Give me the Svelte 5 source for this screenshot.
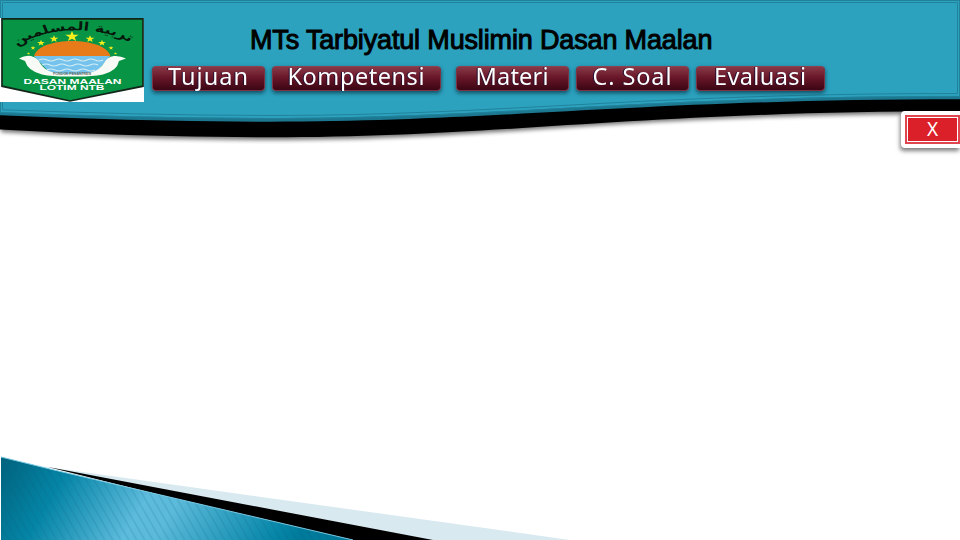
<script>
  const items = [
    { label: 'Tujuan', w: 113, gap: 0, tl: 80 },
    { label: 'Kompetensi', w: 169, gap: 7, tl: 137 },
    { label: 'Materi', w: 113, gap: 15, tl: 73 },
    { label: 'C. Soal', w: 113, gap: 7, tl: 79 },
    { label: 'Evaluasi', w: 129, gap: 7, tl: 92 },
  ];
  const stars = [
    [72, 36.5, 7], [54, 39, 4.6], [90, 39, 4.6], [41, 43, 4], [102, 43, 4],
    [33, 48, 2.6], [111, 48, 2.6], [28.5, 53.5, 1.7], [115.5, 53.5, 1.7],
  ];
  function star(cx, cy, r) {
    return Array.from({ length: 10 }, (_, i) => {
      const q = i % 2 ? r * 0.4 : r;
      const a = (i * Math.PI) / 5;
      return `${cx + q * Math.sin(a)},${cy - q * Math.cos(a) * 0.8}`;
    }).join(' ');
  }
</script>

<main class="slide">
  <svg class="art" viewBox="0 0 960 540" width="960" height="540" aria-hidden="true">
    <defs>
      <filter id="soft" x="-5%" y="-20%" width="110%" height="150%"><feGaussianBlur stdDeviation="2" /></filter>
      <linearGradient id="corner" gradientUnits="userSpaceOnUse" x1="0" y1="470" x2="250" y2="620">
        <stop offset="0" stop-color="#006580" />
        <stop offset=".2" stop-color="#0585a6" />
        <stop offset=".48" stop-color="#5dbbdc" />
        <stop offset=".58" stop-color="#5bb9d9" />
        <stop offset=".92" stop-color="#0787a9" />
        <stop offset="1" stop-color="#007a9a" />
      </linearGradient>
      <pattern id="hatch" width="8" height="12" patternUnits="userSpaceOnUse" patternTransform="skewX(30)">
        <path d="M1 0V12" stroke="#04607b" stroke-opacity=".34" stroke-width=".7" />
      </pattern>
    </defs>
    <path d="M1 80V132C90 137 180 140 270 140C500 140 620 114 960 114V80Z" fill="#000" opacity=".55" filter="url(#soft)" />
    <path d="M0 0H960V111.3C640 111.3 500 137.3 270 137.3C180 137.3 90 134.5 0 129.5Z" fill="#000" />
    <path d="M0 0H960V99.3C640 99.3 500 121.7 270 121.7C180 121.7 90 119 0 115.3Z" fill="#1c7891" />
    <path d="M0 0H959V96C640 96 500 118 270 118C180 118 90 115.6 0 112.3Z" fill="#2ca2bf" />
    <path d="M.5 .5H959.5V96.4C640 96.4 500 118.4 270 118.4C180 118.4 90 116 .5 112.6Z" fill="none" stroke="#21829b" />
    <path d="M2.5 2.5H957.5V93.5C640 93.5 500 115.5 270 115.5C180 115.5 90 113 2.5 109.8Z" fill="none" stroke="#21829b" />
    <path d="M40 466L570 540H420Z" fill="#d9e9f0" />
    <path d="M48 467L433 540H340Z" fill="#000" />
    <path d="M1 457L54 470L353 540H1Z" fill="url(#corner)" />
    <path d="M1 457L54 470L353 540H1Z" fill="url(#hatch)" />
    <path d="M1 457L54 470L353 540" fill="none" stroke="#78c8e3" stroke-width="1" />
  </svg>

  <header>
    <svg class="logo" viewBox="0 18 144 84" width="144" height="84" role="img" aria-label="Logo">
      <path d="M0 18H144V102H0Z" fill="#fff" />
      <path d="M2 18.8H143V86.2L70 101L2 86.2Z" fill="#079545" stroke="#12251a" stroke-width="1.7" />
      <g transform="scale(1 .75)">
        <path id="arch" d="M13 66C42 33 104 33 134 60" fill="none" />
        <text class="arabic" direction="rtl"><textPath href="#arch" startOffset="50%" text-anchor="middle">تربية المسلمين</textPath></text>
      </g>
      {#each stars as [x, y, r]}
        <polygon points={star(x, y, r)} fill="#f5ee1c" />
      {/each}
      <path d="M34 56.5C36 46 54 41 72 41S108 46 110.500 56.5Z" fill="#e77b1a" />
      <path d="M34 56H110L96 73Q72 77 50 73Z" fill="#75c3ed" />
      <path d="M39 60q4-2 8 0t8 0 8 0 8 0 8 0 8 0 8 0 8 0M42 65q4-2 8 0t8 0 8 0 8 0 8 0 8 0 8 0M47 70q4-2 8 0t8 0 8 0 8 0 8 0 8 0" fill="none" stroke="#d5edf2" stroke-width="1.2" />
      <path d="M19 58.5Q25 55 31 56Q38 58 40 63Q44 70 53 72.500Q72 76 91 72.500Q100 70 104 63Q107 57 114 56Q120 55.500 126 58.5L119 61Q117 71 103 74.500Q90 77 72 76.500Q54 77 42 74.500Q28 71 25 61Z" fill="#f8fbf5" />
      <text class="tiny" x="53" y="75" textLength="38" lengthAdjust="spacingAndGlyphs">PONDOK PESANTREN</text>
      <text class="name" x="23.500" y="83.700" textLength="98" lengthAdjust="spacingAndGlyphs">DASAN MAALAN</text>
      <text class="name" x="39.500" y="90.300" textLength="65" lengthAdjust="spacingAndGlyphs">LOTIM NTB</text>
    </svg>
    <div class="heading">
      <h1>MTs Tarbiyatul Muslimin Dasan Maalan</h1>
      <nav>
        {#each items as item}
          <button style:width="{item.w}px" style:margin-left="{item.gap}px" aria-label={item.label}>
            <svg width={item.w - 2} height="26"><text x={(item.w - item.tl) / 2 - 1.5} y="18" textLength={item.tl}>{item.label}</text></svg>
          </button>
        {/each}
      </nav>
    </div>
  </header>
  <button class="close"><span>X</span></button>
</main>

<style>
  :global(body) { margin: 0; background: #fff; }
  .slide { position: relative; width: 960px; height: 540px; overflow: hidden; background: #fff; display: flex; flex-direction: column; }
  .art { position: absolute; inset: 0; }
  header { position: relative; display: flex; height: 111px; flex: none; }
  .logo { margin-top: 18px; flex: none; }
  .heading { padding: 25px 0 0 8px; }
  h1 { margin: 0 0 0 98px; height: 41px; font: 400 27px/31px "Liberation Sans", Arial, sans-serif; letter-spacing: -.15px; color: #000; -webkit-text-stroke: 1px #000; white-space: nowrap; }
  nav { display: flex; }
  nav button { box-sizing: border-box; height: 25px; padding: 0; border: 1px solid #7d3343; border-top-color: #8d4050; border-radius: 4px; background: linear-gradient(#883947, #671527 48%, #3b0614); box-shadow: 0 2px 4px rgba(0, 35, 50, .7); }
  nav svg { display: block; overflow: visible; }
  nav text { font: 23.5px "Noto Sans", sans-serif; fill: #fff; filter: drop-shadow(-1px 0 0 #251032); }
  .name { font: bold 6.400px "Liberation Sans", Arial, sans-serif; fill: #fff; }
  .tiny { font: bold 3px "Liberation Sans", Arial, sans-serif; fill: #636c60; }
  .arabic { font: bold 16px "DejaVu Sans", sans-serif; fill: #07170c; }
  .close { position: relative; align-self: flex-end; box-sizing: border-box; width: 59px; height: 37px; padding: 4px 0 4px 4px; border: 0; border-radius: 4px 0 0 4px; background: #fff; box-shadow: -1px 3px 4px rgba(0, 0, 0, .5); display: flex; }
  .close span { box-sizing: border-box; flex: 1; border: 2px solid #df4650; box-shadow: inset 0 0 0 1px #fff; background: #db202a; color: #fff; font: 19px/25px "Noto Sans", sans-serif; text-align: center; }
</style>
